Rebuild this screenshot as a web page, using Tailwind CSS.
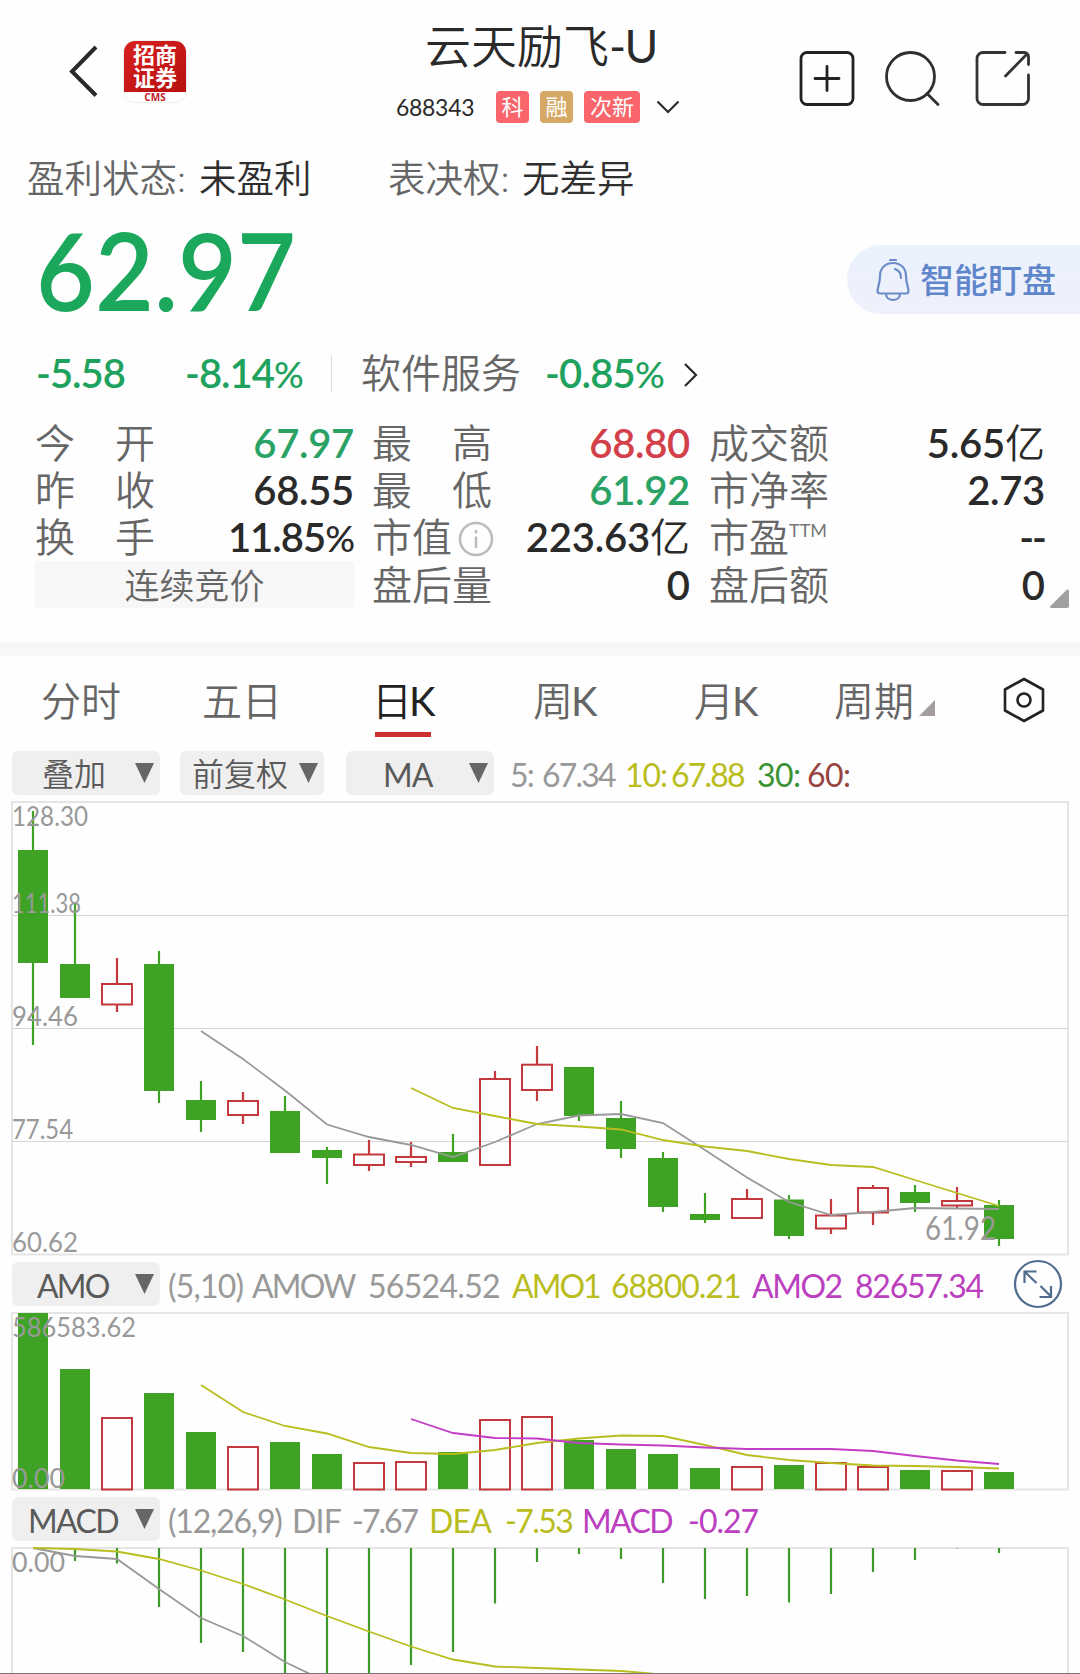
<!DOCTYPE html>
<html lang="zh-CN">
<head>
    <meta charset="UTF-8">
    <meta name="viewport" content="width=device-width, initial-scale=1.0">
    <title>云天励飞-U 688343</title>
    <script src="https://cdn.jsdelivr.net/npm/@tailwindcss/browser@4"></script>
</head>
<body class="bg-[#fefefe] overflow-hidden">
<div class="w-[1080px] h-[1674px] overflow-hidden flex flex-col font-['Lato','Noto_Sans_CJK_SC',sans-serif] text-[#2a2a2a] leading-none whitespace-nowrap border-b border-[#777]">

    <!-- Header -->
    <header class="h-[140px] shrink-0 flex">
        <div class="w-[396px] flex pt-[40px] pl-[68px]">
            <svg class="w-[31px] h-[56px] mt-[4px]" viewBox="0 0 31 56" fill="none" stroke="#2a2a2a" stroke-width="4"><path d="M28 3L4 27.500L28 51.500"/></svg>
            <div class="ml-[24px] w-[64px] h-[63px] rounded-[12px] overflow-hidden bg-white border border-[#eee] flex flex-col items-center">
                <div class="w-[64px] h-[51px] shrink-0 bg-linear-to-br from-[#d8201f] to-[#b5100f] text-white text-[22px] leading-[23px] font-bold text-center pt-[2px]">招商<br>证券</div>
                <div class="text-[10px] font-bold text-[#c5201f] leading-[10px] font-['Open_Sans']">CMS</div>
            </div>
        </div>
        <div class="w-[287px] flex flex-col">
            <h1 class="text-[46px] leading-[52px] mt-[20px] pl-[29px] font-[350]">云天励飞<span class="font-normal tracking-[-1.5px]">-U</span></h1>
            <div class="flex items-center h-[32px] mt-[19px]">
                <span class="w-[100px] text-[23px] pt-px tracking-[-0.3px]">688343</span>
                <span class="w-[33px] h-[32px] rounded-[4px] bg-[#f9656b] text-white text-[22px] flex items-center justify-center">科</span>
                <span class="w-[33px] h-[32px] ml-[11px] rounded-[4px] bg-[#d5a865] text-white text-[22px] flex items-center justify-center">融</span>
                <span class="w-[56px] h-[32px] ml-[11px] rounded-[4px] bg-[#f9656b] text-white text-[22px] flex items-center justify-center">次新</span>
                <svg class="w-[24px] h-[14px] ml-[16px]" viewBox="0 0 24 14" fill="none" stroke="#2a2a2a" stroke-width="2.200"><path d="M1.500 1.500L12 12L22.500 1.500"/></svg>
            </div>
        </div>
        <div class="flex pt-[50px] pl-[116px]">
            <svg class="w-[58px] h-[58px]" viewBox="0 0 58 58" fill="none" stroke="#222" stroke-width="2.800" stroke-linecap="round"><rect x="2" y="2.500" width="52" height="52" rx="6"/><path d="M28 16.500V40.500M16 28.500H40"/></svg>
            <svg class="w-[58px] h-[58px] ml-[28px]" viewBox="0 0 58 58" fill="none" stroke="#2f2f2f" stroke-width="2.800" stroke-linecap="round"><circle cx="25.500" cy="26.500" r="24"/><path d="M42 43.500L53 54.500"/></svg>
            <svg class="w-[58px] h-[58px] ml-[32px]" viewBox="0 0 58 58" fill="none" stroke="#333" stroke-width="2.800" stroke-linecap="round" stroke-linejoin="round"><path d="M30 2.500H8a6 6 0 0 0-6 6V48.500a6 6 0 0 0 6 6H47.500a6 6 0 0 0 6-6V25M41 2.500H49.500a4 4 0 0 1 4 4V14.500M52 4L30.500 26"/></svg>
        </div>
    </header>

    <!-- Listing status -->
    <div class="h-[76px] shrink-0 flex items-center text-[37.500px] font-[350] pl-[27px] text-[#2f2f2f]">
        <span class="w-[172px] text-[#666]">盈利状态:</span>
        <span class="w-[189px]">未盈利</span>
        <span class="w-[134px] text-[#666]">表决权:</span>
        <span>无差异</span>
    </div>

    <!-- Last price -->
    <div class="h-[126px] shrink-0 flex justify-between pl-[36px]">
        <div class="text-[107px] leading-[110px] font-semibold text-[#1ba85c] origin-left scale-x-[.95] -mt-px">62.97</div>
        <div class="w-[233px] h-[69px] mt-[29px] rounded-l-full bg-linear-to-b from-[#eaf2fd] to-[#eff0fb] text-[#5f86cb] flex items-center pl-[29px]">
            <svg class="w-[34px] h-[44px]" viewBox="0 0 34 44" fill="none" stroke="#6c8cc8" stroke-width="2.200" stroke-linecap="round" stroke-linejoin="round"><path d="M14 2H20M17 5C8.500 5 4 11 4 18C4 26 1.500 29 1.500 33Q1.500 35.500 4 35.500H30Q32.500 35.500 32.500 33C32.500 29 30 26 30 18C30 11 25.500 5 17 5ZM10 36C10 44 24 44 24 36M19 11C23.500 12.500 25 16 25 20"/></svg>
            <span class="ml-[10px] text-[34px] font-medium">智能盯盘</span>
        </div>
    </div>

    <!-- Change and sector -->
    <div class="h-[72px] shrink-0 flex items-center pl-[36px] pb-[10px] text-[40px] text-[#1ea25d] font-semibold">
        <span class="w-[149px] tracking-[-1px]">-5.58</span>
        <span class="w-[146px] tracking-[-1px]">-8.14<span class="text-[37px] font-medium">%</span></span>
        <span class="w-px h-[37px] bg-[#ddd]"></span>
        <span class="ml-[29px] w-[184px] text-[#666] font-[350]">软件服务</span>
        <span class="w-[138px] tracking-[-0.8px]">-0.85<span class="text-[37px] font-medium">%</span></span>
        <svg class="w-[15px] h-[26px] mt-[4px]" viewBox="0 0 15 26" fill="none" stroke="#2a2a2a" stroke-width="2.200"><path d="M2 2L13 13L2 24"/></svg>
    </div>

    <!-- Quote table -->
    <div class="h-[228px] shrink-0 pl-[35px] pt-[5px] flex text-[40px] font-semibold">
        <div class="w-[319px] flex flex-col">
            <div class="h-[47px] flex items-center justify-between"><span class="font-[350] text-[#666]">今　开</span><span class="text-[#2aa265] tracking-[-0.3px]">67.97</span></div>
            <div class="h-[47px] flex items-center justify-between"><span class="font-[350] text-[#666]">昨　收</span><span class="tracking-[-0.3px]">68.55</span></div>
            <div class="h-[47px] flex items-center justify-between"><span class="font-[350] text-[#666]">换　手</span><span class="tracking-[-1px]">11.85<span class="text-[37px] font-medium">%</span></span></div>
            <div class="h-[47px] mt-[1px] pt-[2px] flex items-center justify-center bg-[#f7f7f7] rounded-[4px] text-[35px] font-[350] text-[#666]">连续竞价</div>
        </div>
        <div class="w-[318px] ml-[18px] flex flex-col">
            <div class="h-[47px] flex items-center justify-between"><span class="font-[350] text-[#666]">最　高</span><span class="text-[#d2404a] tracking-[-0.3px]">68.80</span></div>
            <div class="h-[47px] flex items-center justify-between"><span class="font-[350] text-[#666]">最　低</span><span class="text-[#2aa265] tracking-[-0.3px]">61.92</span></div>
            <div class="h-[47px] flex items-center">
                <span class="font-[350] text-[#666]">市值</span>
                <svg class="w-[36px] h-[36px] ml-[6px] mt-[4px]" viewBox="0 0 36 36" fill="none" stroke="#bbb" stroke-width="2.500"><circle cx="18" cy="18" r="16"/><path d="M18 15.500V27M18 9V12.500"/></svg>
                <span class="ml-auto tracking-[-0.2px]">223.63<span class="font-[350] tracking-normal">亿</span></span>
            </div>
            <div class="h-[47px] mt-[1px] flex items-center justify-between"><span class="font-[350] text-[#666]">盘后量</span><span>0</span></div>
        </div>
        <div class="w-[336px] ml-[19px] flex flex-col">
            <div class="h-[47px] flex items-center justify-between"><span class="font-[350] text-[#666]">成交额</span><span class="tracking-[-0.2px]">5.65<span class="font-[350] tracking-normal">亿</span></span></div>
            <div class="h-[47px] flex items-center justify-between"><span class="font-[350] text-[#666]">市净率</span><span class="tracking-[-0.3px]">2.73</span></div>
            <div class="h-[47px] flex items-center"><span class="font-[350] text-[#666]">市盈</span><span class="text-[18px] font-normal text-[#777] -mt-[14px]">TTM</span><span class="ml-auto tracking-[-2px]">--</span></div>
            <div class="h-[47px] mt-[1px] flex items-center justify-between"><span class="font-[350] text-[#666]">盘后额</span><span>0</span></div>
        </div>
        <svg class="w-[19px] h-[19px] mt-[170px] ml-[5px]" viewBox="0 0 19 19"><path d="M19 2V17Q19 19 17 19H1Q0 19 0 17.500L17 .5Q19 0 19 2Z" fill="#a0a0a0"/></svg>
    </div>

    <div class="h-[14px] shrink-0 bg-[#f7f7f7]"></div>

    <!-- Period tabs -->
    <nav class="h-[95px] shrink-0 flex pt-[21px] pl-[41px] text-[40px] leading-[48px] font-[350] text-[#666]">
        <span class="w-[161px]">分时</span>
        <span class="w-[173px]">五日</span>
        <span class="w-[158px] flex flex-col text-[#222]"><b class="-ml-[3px] font-[350]">日<span class="font-normal -ml-[3px]">K</span></b><i class="w-[56px] h-[5px] mt-[7px] bg-[#c9302f]"></i></span>
        <span class="w-[161px]">周<span class="font-normal -ml-[2px]">K</span></span>
        <span class="w-[140px]">月<span class="font-normal -ml-[2px]">K</span></span>
        <span>周期</span>
        <svg class="w-[16px] h-[16px] mt-[23px] ml-[5px]" viewBox="0 0 16 16"><path d="M16 0V16H0Z" fill="#a39d9d"/></svg>
        <svg class="w-[42px] h-[46px] ml-[68px]" viewBox="0 0 42 46" fill="none" stroke="#222" stroke-width="2.600" stroke-linejoin="round"><path d="M21 2L40 12.500V33.500L21 44L2 33.500V12.500Z"/><circle cx="21" cy="23" r="6.500"/></svg>
    </nav>

    <!-- Overlay selectors -->
    <div class="h-[44px] shrink-0 flex pl-[12px] text-[32px] font-[350] text-[#5a5a5a]">
        <div class="w-[148px] rounded-[6px] bg-[#efefef] flex items-center pl-[30px]"><span class="w-[93px] pt-[2px]">叠加</span><svg class="w-[19px] h-[20px]" viewBox="0 0 19 20"><path d="M0 0H19L9.500 20Z" fill="#666"/></svg></div>
        <div class="w-[144px] ml-[20px] rounded-[6px] bg-[#efefef] flex items-center pl-[12px]"><span class="w-[107px] pt-[2px]">前复权</span><svg class="w-[19px] h-[20px]" viewBox="0 0 19 20"><path d="M0 0H19L9.500 20Z" fill="#666"/></svg></div>
        <div class="w-[148px] ml-[22px] rounded-[6px] bg-[#efefef] flex items-center pl-[37px]"><span class="w-[86px] pt-[3px] font-normal tracking-[-1px]">MA</span><svg class="w-[19px] h-[20px]" viewBox="0 0 19 20"><path d="M0 0H19L9.500 20Z" fill="#666"/></svg></div>
        <div class="ml-[16px] pt-[3px] flex items-center font-normal tracking-[-1.8px] text-[32px]">
            <span class="w-[32px] text-[#999]">5:</span><span class="w-[83px] text-[#999]">67.34</span>
            <span class="w-[46px] tracking-[-1px] text-[#b9bd1e]">10:</span><span class="w-[86px] text-[#b9bd1e]">67.88</span>
            <span class="w-[50px] tracking-[-0.5px] text-[#3a9233]">30:</span><span class="tracking-[-0.5px] text-[#984340]">60:</span>
        </div>
    </div>

    <!-- Daily candles -->
    <svg id="candleChart" class="w-[1080px] h-[467px] shrink-0" viewBox="0 795 1080 467"></svg>

    <!-- AMO -->
    <div class="h-[44px] shrink-0 flex items-center pl-[12px] text-[32px] text-[#999]">
        <div class="w-[148px] h-[44px] rounded-[6px] bg-[#efefef] text-[#5a5a5a] flex items-center pl-[25px]"><span class="w-[98px] pt-[3px] tracking-[-1.8px]">AMO</span><svg class="w-[19px] h-[20px]" viewBox="0 0 19 20"><path d="M0 0H19L9.500 20Z" fill="#666"/></svg></div>
        <span class="ml-[8px] w-[84px] pt-[3px] tracking-[-0.8px]">(5,10)</span><span class="w-[116px] pt-[3px] tracking-[-1.8px]">AMOW</span><span class="w-[144px] pt-[3px] tracking-[-0.7px]">56524.52</span>
        <span class="w-[99px] pt-[3px] tracking-[-2px] text-[#b9bd1e]">AMO1</span><span class="w-[141px] pt-[3px] tracking-[-1px] text-[#b9bd1e]">68800.21</span>
        <span class="w-[103px] pt-[3px] tracking-[-1.5px] text-[#bb40bf]">AMO2</span><span class="w-[158px] pt-[3px] tracking-[-1.2px] text-[#bb40bf]">82657.34</span>
        <svg class="w-[50px] h-[50px] shrink-0" viewBox="0 0 50 50" fill="none" stroke="#4f6b8d" stroke-width="2.200"><circle cx="25" cy="25" r="23"/><path d="M23.500 24L12 13M11.500 24V12.500H23.500M27.500 27L38 37.500M26.500 38H38V27"/></svg>
    </div>
    <svg id="amoChart" class="w-[1080px] h-[191px] shrink-0" viewBox="0 1306 1080 191"></svg>

    <!-- MACD -->
    <div class="h-[44px] shrink-0 flex items-center pl-[12px] text-[32px] text-[#999]">
        <div class="w-[148px] h-[44px] rounded-[6px] bg-[#efefef] text-[#5a5a5a] flex items-center pl-[16px]"><span class="w-[107px] pt-[3px] tracking-[-1.6px]">MACD</span><svg class="w-[19px] h-[20px]" viewBox="0 0 19 20"><path d="M0 0H19L9.500 20Z" fill="#666"/></svg></div>
        <span class="ml-[8px] w-[124px] pt-[3px] tracking-[-1.2px]">(12,26,9)</span><span class="w-[60px] pt-[3px] tracking-[-0.8px]">DIF</span><span class="w-[77px] pt-[3px] tracking-[-2px]">-7.67</span>
        <span class="w-[76px] pt-[3px] tracking-[-0.8px] text-[#b9bd1e]">DEA</span><span class="w-[77px] pt-[3px] tracking-[-1.6px] text-[#b9bd1e]">-7.53</span>
        <span class="w-[106px] pt-[3px] tracking-[-1.6px] text-[#bb40bf]">MACD</span><span class="pt-[3px] tracking-[-1px] text-[#bb40bf]">-0.27</span>
    </div>
    <svg id="macdChart" class="w-[1080px] h-[133px] shrink-0" viewBox="0 1541 1080 133"></svg>
</div>

<script>
    const GREEN = '#3ea324';
    const RED = '#c3383d';
    const x = (i) => 33 + i * 42;

    // [up?, high, body top, body bottom, low]
    const candles = [
        [0, 811, 850, 963, 1045], [0, 902, 964, 998, 998], [1, 958, 984, 1004.5, 1012], [0, 951, 964, 1091, 1103],
        [0, 1081, 1100, 1120, 1132], [1, 1092, 1101, 1115, 1124], [0, 1096, 1111, 1153, 1153], [0, 1147, 1150, 1158, 1184],
        [1, 1140, 1154.5, 1165, 1171], [1, 1142, 1157, 1162, 1167], [0, 1134, 1152, 1162, 1162], [1, 1071, 1079, 1165, 1165],
        [1, 1046, 1064.7, 1090, 1101], [0, 1067, 1067, 1116, 1121], [0, 1101, 1118, 1149, 1158], [0, 1152, 1158, 1207, 1212],
        [0, 1193, 1214, 1220, 1223], [1, 1189, 1199, 1218, 1218], [0, 1195, 1199.5, 1236, 1239], [1, 1199, 1215.5, 1228.5, 1234],
        [1, 1185, 1188, 1212.5, 1225], [0, 1185, 1192, 1203, 1212], [1, 1187, 1201, 1205.5, 1208], [0, 1200, 1205, 1239, 1246]
    ];
    const ma5 = [1031, 1059, 1090.5, 1124.5, 1137, 1145, 1157, 1142, 1124, 1115.5, 1114, 1123, 1150, 1177.5, 1202, 1215, 1212, 1208, 1208.5, 1209];
    const ma10 = [1088, 1108, 1116, 1124, 1126.5, 1129.5, 1140, 1146.5, 1151, 1159, 1165, 1167, 1180, 1193, 1206];
    const amo = [1313, 1369, 1418, 1393, 1432, 1447, 1442, 1454, 1463, 1462, 1452, 1420, 1417, 1440, 1449, 1454, 1468, 1467, 1465, 1463, 1467, 1470, 1471, 1472];
    const amo1 = [1385, 1412, 1426, 1433.5, 1447, 1453, 1454, 1450, 1443, 1438.5, 1435.5, 1436, 1445, 1455, 1460, 1463, 1465.5, 1466, 1467, 1468.5];
    const amo2 = [1419, 1433, 1438, 1438.5, 1443, 1444.5, 1445.5, 1447.5, 1449, 1449, 1449, 1451, 1456, 1460.5, 1464];
    const macd = [1548, 1561, 1563.5, 1607, 1643, 1652, 1680, 1680, 1680, 1665, 1652, 1603.5, 1562, 1554, 1559, 1583, 1599, 1596, 1602.5, 1594, 1572, 1560, 1548.5, 1553];
    const dif = [1548, 1556, 1559, 1589, 1618, 1636, 1662, 1682];
    const dea = [1548, 1549, 1551.5, 1559, 1570.5, 1584, 1599.5, 1616, 1631.5, 1646.5, 1659.5, 1666.5, 1668, 1669.5, 1671, 1674.5];

    const rect = (rx, y, w, h, fill, stroke) => `<rect x="${rx}" y="${y}" width="${w}" height="${h}" fill="${fill}" stroke="${stroke}" stroke-width="2"/>`;
    const line = (x1, y1, x2, y2, color, w) => `<line x1="${x1}" y1="${y1}" x2="${x2}" y2="${y2}" stroke="${color}" stroke-width="${w}"/>`;
    const curve = (values, start, color) => `<polyline fill="none" stroke="${color}" stroke-width="1.8" points="${values.map((v, i) => x(start + i) + ',' + v).join(' ')}"/>`;
    const label = (tx, y, len, size, text) => `<text x="${tx}" y="${y}" font-size="${size}" textLength="${len}" lengthAdjust="spacingAndGlyphs" fill="#999">${text}</text>`;

    // Price panel
    let out = rect(12, 802, 1056, 452.5, 'none', '#e5e5e5');
    [915.5, 1028.5, 1141.5].forEach((y) => { out += line(12, y, 1068, y, '#d5d5d5', 1); });
    candles.forEach(([up, high, top, bottom, low], i) => {
        const color = up ? RED : GREEN;
        out += line(x(i), high, x(i), top, color, 2.2) + line(x(i), bottom, x(i), low, color, 2.2);
        out += up ? rect(x(i) - 15, top, 30, bottom - top, 'none', RED) : `<rect x="${x(i) - 15}" y="${top}" width="30" height="${bottom - top}" fill="${GREEN}"/>`;
    });
    out += curve(ma5, 4, '#999') + curve(ma10, 9, '#b9bd1e');
    out += label(12, 825.5, 76, 27, '128.30') + label(12, 912.5, 69, 27, '111.38') + label(12, 1025.5, 66, 27, '94.46');
    out += label(12, 1138.5, 61, 27, '77.54') + label(12, 1251.5, 66, 27, '60.62') + label(925, 1240, 71, 33, '61.92');
    document.getElementById('candleChart').innerHTML = out;

    // Turnover panel
    out = rect(12, 1313, 1056, 176.5, 'none', '#e5e5e5');
    amo.forEach((top, i) => {
        out += candles[i][0] ? rect(x(i) - 15, top, 30, 1489.5 - top, 'none', RED) : `<rect x="${x(i) - 15}" y="${top}" width="30" height="${1489 - top}" fill="${GREEN}"/>`;
    });
    out += curve(amo1, 4, '#b9bd1e') + curve(amo2, 9, '#c23cc6');
    out += label(12, 1336.5, 124, 27, '586583.62') + label(12, 1487.5, 53, 27, '0.00');
    document.getElementById('amoChart').innerHTML = out;

    // MACD panel
    out = rect(12, 1548, 1056, 140, 'none', '#e5e5e5');
    macd.forEach((y, i) => { out += line(x(i), 1548, x(i), y, '#3f9a2c', 2.2); });
    out += curve(dif, 0, '#999') + curve(dea, 0, '#b9bd1e');
    out += label(12, 1571.5, 53, 27, '0.00');
    document.getElementById('macdChart').innerHTML = out;
</script>
</body>
</html>
